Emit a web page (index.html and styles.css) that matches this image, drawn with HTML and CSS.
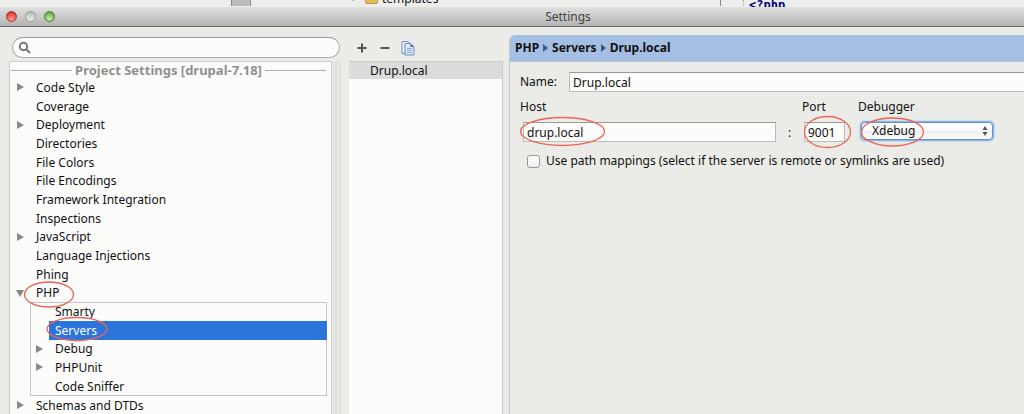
FILE: index.html
```html
<!DOCTYPE html>
<html lang="en">
<head>
<meta charset="utf-8">
<title>Settings</title>
<link rel="stylesheet" href="styles.css">
</head>
<body>
<div class="backdrop" aria-hidden="true">
  <span class="backdrop-scroll"></span>
  <span class="backdrop-file"><i class="caret"></i><i class="folder"></i>templates</span>
  <span class="backdrop-gutter"></span>
  <span class="backdrop-code">&lt;?php</span>
</div>
<header class="titlebar">
  <div class="lights">
    <button class="light red" aria-label="Close"></button>
    <button class="light gray" aria-label="Minimize"></button>
    <button class="light green" aria-label="Zoom"></button>
  </div>
  <h1 class="title">Settings</h1>
</header>
<main class="settings">
  <aside class="sidebar">
    <div class="search">
      <svg class="search-icon" viewBox="0 0 14 14"><circle cx="5.5" cy="5.5" r="3.7"/><path d="M8.3 8.3L12 12"/></svg>
      <input class="search-input" type="text" aria-label="Search settings">
    </div>
    <div class="tree-wrap">
      <nav class="tree">
        <h2 class="group"><span>Project Settings [drupal-7.18]</span></h2>
        <ul class="rows">
          <li class="row closed">Code Style</li>
          <li class="row">Coverage</li>
          <li class="row closed">Deployment</li>
          <li class="row">Directories</li>
          <li class="row">File Colors</li>
          <li class="row">File Encodings</li>
          <li class="row">Framework Integration</li>
          <li class="row">Inspections</li>
          <li class="row closed">JavaScript</li>
          <li class="row">Language Injections</li>
          <li class="row">Phing</li>
          <li class="row open">PHP</li>
        </ul>
        <ul class="rows nested">
          <li class="row">Smarty</li>
          <li class="row selected">Servers</li>
          <li class="row closed">Debug</li>
          <li class="row closed">PHPUnit</li>
          <li class="row">Code Sniffer</li>
        </ul>
        <ul class="rows">
          <li class="row closed">Schemas and DTDs</li>
        </ul>
      </nav>
      <div class="scrollbar"></div>
    </div>
  </aside>
  <section class="servers">
    <div class="toolbar">
      <button class="tool" aria-label="Add"><svg class="glyph" viewBox="0 0 14 14"><path d="M7 2.5v9M2.5 7h9"/></svg></button>
      <button class="tool" aria-label="Remove"><svg class="glyph" viewBox="0 0 14 14"><path d="M2.5 7h9"/></svg></button>
      <button class="tool" aria-label="Copy"><svg class="copy" viewBox="0 0 14 16"><path class="sheet" d="M1 1.5h6l2 2v10H1z"/><path class="sheet front" d="M4 3.500h5.500l3.500 3.500v8H4z"/><path class="fold" d="M9.500 3.500v3.500h3.500z"/><path class="lines" d="M6 8.500h5M6 10.500h5M6 12.500h5"/></svg></button>
    </div>
    <ul class="server-list"><li class="server">Drup.local</li></ul>
  </section>
  <section class="detail">
    <div class="crumbs"><span>PHP</span><i class="sep"></i><span>Servers</span><i class="sep"></i><span>Drup.local</span></div>
    <form class="form">
      <div class="name-row">
        <label for="name">Name:</label>
        <input class="field" id="name" type="text" value="Drup.local">
      </div>
      <div class="server-row">
        <div class="cell host"><label for="host">Host</label><input class="field" id="host" type="text" value="drup.local"></div>
        <span class="colon">:</span>
        <div class="cell port"><label for="port">Port</label><input class="field" id="port" type="text" value="9001"></div>
        <div class="cell debugger"><label for="debugger">Debugger</label>
          <div class="select-wrap">
            <select class="select" id="debugger"><option>Xdebug</option></select>
            <svg class="arrows" viewBox="0 0 6 12"><path d="M3 1l2.500 4h-5zM3 11l2.500-4h-5z"/></svg>
          </div>
        </div>
      </div>
      <div class="check-row">
        <input class="check" id="mappings" type="checkbox">
        <label for="mappings">Use path mappings (select if the server is remote or symlinks are used)</label>
      </div>
    </form>
  </section>
</main>
<svg class="marks" width="1024" height="414" aria-hidden="true">
  <ellipse cx="562.500" cy="131.500" rx="42" ry="14"/>
  <ellipse cx="827.500" cy="132" rx="23" ry="15.500"/>
  <ellipse cx="892.500" cy="132" rx="31" ry="14"/>
  <ellipse cx="49" cy="294.500" rx="24.500" ry="12.500"/>
  <ellipse cx="77" cy="329" rx="30" ry="11.500"/>
</svg>
</body>
</html>
```
FILE: styles.css
```css
* { box-sizing: border-box; }
body {
  margin: 0;
  height: 100vh;
  display: flex;
  flex-direction: column;
  overflow: hidden;
  background: #ebebe8;
  color: #111;
  font: 12px/18px "Noto Sans", "Open Sans", sans-serif;
}
ul { list-style: none; margin: 0; padding: 0; }
button { border: 0; padding: 0; background: none; }
input, select { font: inherit; color: inherit; margin: 0; }

/* Editor window that shows above the dialog */
.backdrop { position: relative; flex: none; height: 7px; background: #ededeb; overflow: hidden; }
.backdrop-scroll { position: absolute; left: 231px; top: 0; width: 20px; height: 6px; background: #bdbdbb; border: solid #888; border-width: 0 1px; }
.backdrop-file { position: absolute; left: 349px; top: -10px; display: flex; align-items: center; }
.backdrop-gutter { position: absolute; left: 720px; top: 0; width: 24px; height: 6px; border-left: 1px solid #888; border-right: 1px dotted #aaa; }
.backdrop-code { position: absolute; left: 749px; top: -4px; color: #000080; font: bold 12px/18px "DejaVu Sans Mono", monospace; }
.caret { border: 4px solid transparent; border-top-color: #888; border-bottom: 0; margin-right: 8px; }
.folder { width: 13px; height: 10px; margin-right: 4px; border-radius: 2px; background: #e3bd5c; border: 1px solid #b8923a; }

.titlebar {
  flex: none;
  display: flex;
  align-items: center;
  height: 20px;
  padding: 0 6px;
  background: linear-gradient(#e0e0df, #b4b4b4);
  border-bottom: 1px solid #6c6767;
}
.lights { display: flex; gap: 8px; width: 56px; }
.light { width: 11px; height: 11px; border-radius: 50%; border: 1px solid #777; }
.red { background: radial-gradient(circle at 50% 80%, #ffa49b, #ee4b42 60%, #c62720); border-color: #9c3832; }
.gray { background: linear-gradient(#bcbcbc, #ededed); border-color: #999; }
.green { background: radial-gradient(circle at 50% 80%, #c8f0a4, #80bd5c 60%, #5d9440); border-color: #52783e; }
.title { flex: 1; margin: 0 0 0 56px; font-size: 12px; line-height: 18px; font-weight: 400; color: #444; text-align: center; }

.settings { flex: 1; min-height: 0; display: flex; }
.sidebar { flex: none; width: 349px; padding: 10px 8px 0 9px; display: flex; flex-direction: column; }
.search {
  display: flex;
  align-items: center;
  gap: 4px;
  height: 21px;
  margin: 0 1px 3px 3px;
  padding: 0 8px 0 5px;
  background: #fcfcfb;
  border: 1px solid #aaa;
  border-top-color: #999;
  border-radius: 11px;
}
.search-icon { width: 14px; height: 14px; fill: none; stroke: #777; stroke-width: 2; }
.search-input { flex: 1; min-width: 0; border: 0; background: none; outline: 0; }
.tree-wrap { flex: 1; min-height: 0; display: flex; }
.tree { flex: 1; min-width: 0; overflow: hidden; background: #fcfcfb; border: solid #ccc; border-width: 1px 1px 0; }
.scrollbar { width: 9px; background: linear-gradient(90deg, #ececea, #dededd, #ececea); border-right: 1px solid #d4d4d4; }
.group { display: flex; align-items: center; gap: 3px; margin: 0; padding: 0 5px 0 1px; height: 16px; font-size: 13px; line-height: 16px; color: #909090; }
.group::before, .group::after { content: ""; flex: 1; height: 1px; background: #aaa; }

/* Three rows take 56px */
.row { position: relative; height: 19px; line-height: 19px; padding-left: 26px; white-space: nowrap; }
.row:nth-child(3n) { height: 18px; line-height: 18px; }
.closed::before, .open::before { content: ""; position: absolute; left: 7px; top: 5px; border: 4px solid transparent; }
.closed::before { border-left: 7px solid #888; border-right: 0; }
.open::before { left: 6px; top: 6px; border-top: 7px solid #888; border-bottom: 0; }
.nested { margin: 0 4px 0 20px; outline: 1px solid #c4c4ca; outline-offset: -1px; }
.nested .row { padding-left: 25px; }
.nested .closed::before { left: 6px; }
.nested .selected { margin-left: 19px; padding-left: 6px; background: #2b74da; color: #fff; }

.servers { flex: none; width: 160px; padding-top: 10px; display: flex; flex-direction: column; }
.toolbar { display: flex; align-items: center; height: 21px; gap: 9px; padding-left: 6px; margin-bottom: 3px; }
.tool { width: 14px; height: 16px; display: flex; align-items: center; }
.glyph { width: 14px; height: 14px; fill: none; stroke: #555; stroke-width: 2; }
.copy { width: 14px; height: 16px; }
.sheet { fill: #edf1f8; stroke: #6f8dbd; }
.front { fill: #dbe6f8; }
.fold { fill: #4f74b5; }
.lines { stroke: #8eabdf; fill: none; }
.server-list { flex: 1; width: 154px; background: #fcfcfb; border: solid #ccc; border-width: 1px 1px 0 0; }
.server { height: 17px; line-height: 18px; padding-left: 21px; background: #dcdcdb; }

.detail { flex: 1; min-width: 0; margin-top: 8px; border-left: 1px solid #c8c8c8; border-top-left-radius: 6px; overflow: hidden; }
.crumbs { display: flex; align-items: center; gap: 4px; height: 27px; padding-left: 5px; background: #a5bee4; border-bottom: 1px solid #b9c5da; font-weight: 700; }
.sep { border: 4px solid transparent; border-left: 5px solid #3f5686; border-right: 0; }
.form { padding: 10px 0 0 10px; }
.field { display: block; width: 100%; min-width: 0; height: 20px; padding: 0 3px; background: #fcfcfb; border: 1px solid #bbb; border-top-color: #999; border-radius: 0; }
.name-row { display: flex; align-items: center; gap: 12px; margin-bottom: 6px; }
.name-row .field { flex: 1; border-right: 0; }
.server-row { display: flex; align-items: flex-end; }
.cell label { display: block; margin-bottom: 6px; }
.host { width: 256px; }
.host .field { width: 253px; margin-left: 3px; }
.colon { width: 26px; padding-left: 12px; }
.port { width: 56px; }
.port .field { width: 41px; margin-left: 2px; }
.debugger { width: 136px; }
.select-wrap { position: relative; margin-left: 3px; width: 132px; height: 20px; }
.select {
  width: 100%;
  height: 18px;
  padding: 0 10px;
  line-height: 16px;
  appearance: none;
  background: linear-gradient(#fff, #fbfbfb 45%, #eee 50%, #fcfcfc);
  border: 1px solid #5f93cf;
  border-radius: 4px;
  box-shadow: 0 0 0 1px #8db5e4, 0 0 2px 1px #8db5e4;
}
.arrows { position: absolute; right: 5px; top: 3px; width: 6px; height: 12px; fill: #555; pointer-events: none; }
.check-row { display: flex; align-items: center; gap: 6px; margin: 10px 0 0 7px; white-space: nowrap; }
.check { appearance: none; width: 13px; height: 13px; border: 1px solid #999; border-radius: 3px; background: linear-gradient(#fff, #eee); }

/* Red highlights over the form */
.marks { position: absolute; left: 0; top: 0; fill: none; stroke: #ee6455; stroke-width: 1.3; pointer-events: none; }
```
